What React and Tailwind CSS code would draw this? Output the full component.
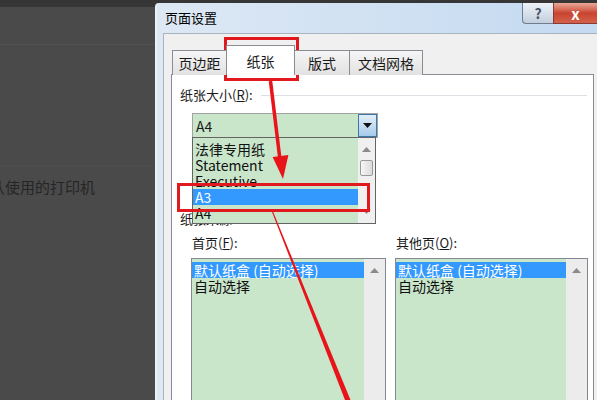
import React from 'react';

const green = 'bg-[#c9e6cb]';

function UpArrow() {
    return (
        <svg width="9" height="5" viewBox="0 0 9 5">
            <path d="M0 5 L4.5 0 L9 5 Z" fill="#8a8a8a" />
        </svg>
    );
}

function DownArrow({ color = '#8a8a8a' }) {
    return (
        <svg width="9" height="5" viewBox="0 0 9 5">
            <path d="M0 0 L4.5 5 L9 0 Z" fill={color} />
        </svg>
    );
}

function ListBox({ width, items }) {
    return (
        <div className={`flex h-[160px] border border-[#828790] ${green} ${width}`}>
            <div className="flex-1 pt-[3px] text-[14px] leading-[16px]">
                {items.map((item, i) => (
                    <div
                        key={item}
                        className={i === 0 ? 'bg-[#3399ff] text-white pl-[2px] h-[16px]' : 'pl-[2px] h-[16px] text-[#111]'}
                    >
                        {item}
                    </div>
                ))}
            </div>
            <div className="w-[21px] bg-[#ececec] flex justify-center pt-[9px]">
                <UpArrow />
            </div>
        </div>
    );
}

export default function App() {
    const trays = ['默认纸盒 (自动选择)', '自动选择'];

    return (
        <div className="relative w-[597px] h-[400px] overflow-hidden bg-[#4a4a4a] flex font-['Noto_Sans_CJK_SC',sans-serif]">
            {/* 背景 */}
            <div className="w-[155px] shrink-0 flex flex-col overflow-hidden">
                <div className="h-[7px] bg-[#363636]" />
                <div className="h-[37px]" />
                <div className="h-[121px] border-t border-[#515151]" />
                <div className="flex-1 border-t border-[#4f4f4f] pt-[12px]">
                    <div className="ml-[-25px] whitespace-nowrap text-[15px] leading-[18px] text-[#262626]">默认使用的打印机</div>
                </div>
            </div>

            {/* 对话框 */}
            <div className="flex-1 flex flex-col bg-[#363636] pt-[3px]">
                <div className="flex-1 flex flex-col rounded-tl-[4px] border-l-2 border-[#eef1f5] bg-gradient-to-r from-[#dde8f4] to-[#c4daf1]">
                    <div className="h-[30px] flex shrink-0">
                        <div className="pl-[8px] pt-[7px] text-[13px] leading-[16px] text-black">页面设置</div>
                        <div className="ml-auto flex h-[21px]">
                            <div className="w-[31px] h-[21px] rounded-bl-[4px] border-l border-b border-[#6f7d90] bg-gradient-to-b from-[#eef3f8] to-[#c3cfdd] flex items-center justify-center text-[14px] font-bold text-[#4a5566]">?</div>
                            <div className="w-[44px] h-[21px] border-l border-b border-[#8a3a33] bg-gradient-to-b from-[#e9a99a] via-[#c8442f] to-[#d3614a] flex items-center justify-center text-[15px] font-bold text-white leading-none">x</div>
                        </div>
                    </div>

                    <div className="flex-1 ml-[6px] flex flex-col bg-[#f0f0f0] border-l border-t border-[#a8b3c0]">
                        {/* 标签页 */}
                        <div className="h-[40px] flex items-end pl-[8px] relative z-10 text-[14px] leading-[16px] text-[#1a1a1a]">
                            <div className="w-[55px] h-[25px] border border-b-0 border-[#898c95] bg-gradient-to-b from-[#f5f5f5] to-[#e2e2e2] flex items-center justify-center -mb-px">页边距</div>
                            <div className="w-[69px] h-[30px] border border-b-0 border-[#898c95] bg-white flex items-center justify-center -mb-px -mx-px">纸张</div>
                            <div className="w-[56px] h-[25px] border border-b-0 border-[#898c95] bg-gradient-to-b from-[#f5f5f5] to-[#e2e2e2] flex items-center justify-center -mb-px">版式</div>
                            <div className="w-[73px] h-[25px] border border-b-0 border-l-0 border-[#898c95] bg-gradient-to-b from-[#f5f5f5] to-[#e2e2e2] flex items-center justify-center -mb-px">文档网格</div>
                        </div>

                        <div className="flex-1 ml-[7px] mr-[3px] border border-[#898c95] bg-white text-[13px] leading-[16px] text-[#1a1a1a]">
                            <div className="mt-[12px] pl-[8px] pr-[6px] flex items-center h-[16px]">
                                <span>纸张大小(<span className="underline">R</span>):</span>
                                <div className="flex-1 h-px bg-[#dcdfe3] ml-[8px]" />
                            </div>

                            <div className={`mt-[10px] ml-[20px] w-[186px] h-[25px] border border-[#a3a3a3] ${green} flex`}>
                                <div className="flex-1 pl-[3px] flex items-center text-[14px]">A4</div>
                                <div className="w-[19px] border border-[#3c78a8] bg-gradient-to-b from-[#e2eff9] to-[#a7cbeb] flex items-center justify-center">
                                    <DownArrow color="#111" />
                                </div>
                            </div>

                            <div className="mt-[73px] pl-[8px] h-[16px]">纸张来源</div>

                            <div className="mt-[8px] flex">
                                <div className="ml-[19px] flex flex-col">
                                    <div className="pl-[1px] h-[16px]">首页(<span className="underline">F</span>):</div>
                                    <div className="mt-[7px]">
                                        <ListBox width="w-[195px]" items={trays} />
                                    </div>
                                </div>
                                <div className="ml-[9px] flex flex-col">
                                    <div className="pl-[1px] h-[16px]">其他页(<span className="underline">O</span>):</div>
                                    <div className="mt-[7px]">
                                        <ListBox width="w-[193px]" items={trays} />
                                    </div>
                                </div>
                            </div>
                        </div>
                    </div>
                </div>
            </div>

            {/* 下拉列表 */}
            <div className={`absolute left-[192px] top-[137px] w-[184px] h-[87px] border border-[#646464] ${green} flex overflow-hidden text-[14px] leading-[16px] text-[#111]`}>
                <div className="flex-1 pt-[3px]">
                    <div className="pl-[2px] h-[16px]">法律专用纸</div>
                    <div className="pl-[2px] h-[16px]">Statement</div>
                    <div className="pl-[2px] h-[16px]">Executive</div>
                    <div className="pl-[2px] h-[16px] bg-[#3399ff] text-white">A3</div>
                    <div className="pl-[2px] h-[16px]">A4</div>
                </div>
                <div className="w-[17px] bg-[#f0f0f0] flex flex-col items-center">
                    <div className="mt-[9px]"><UpArrow /></div>
                    <div className="mt-[8px] w-[13px] h-[16px] rounded-[2px] border border-[#9a9a9a] bg-gradient-to-r from-[#f6f6f6] to-[#dcdcdc]" />
                    <div className="mt-auto mb-[9px]"><DownArrow /></div>
                </div>
            </div>

            {/* 红框 */}
            <div className="absolute left-[224px] top-[37px] w-[75px] h-[44px] border-[3px] border-[#e1191e]" />
            <div className="absolute left-[177px] top-[183px] w-[193px] h-[29px] border-[3px] border-[#e1191e]" />

            {/* 箭头 */}
            <svg className="absolute inset-0 pointer-events-none" width="597" height="400" viewBox="0 0 597 400">
                <line x1="270.5" y1="81" x2="280" y2="160" stroke="#e8141a" strokeWidth="3.5" />
                <polygon points="272.6,156.9 288.4,155.1 283,179" fill="#e8141a" />
                <polygon points="272,212 273.2,212 350.5,400 345,400" fill="#e8141a" />
            </svg>
        </div>
    );
}
